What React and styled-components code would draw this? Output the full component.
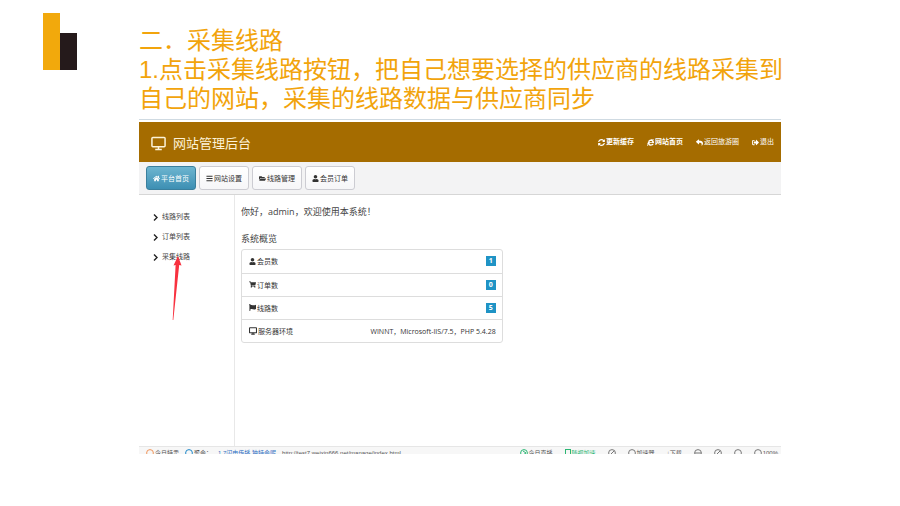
import React from 'react';
import styled, {createGlobalStyle} from "styled-components";
import {
    FaHome, FaBars, FaFolderOpen, FaUser, FaShoppingCart, FaFlag,
    FaSyncAlt, FaInternetExplorer, FaReply, FaSignOutAlt,
} from "react-icons/fa";

const GlobalStyle = createGlobalStyle`
  * {
    box-sizing: border-box;
  }

  body {
    margin: 0;
    background-color: #fff;
    font-family: "Open Sans", "Noto Sans CJK SC", sans-serif;
    color: #444;
  }
`;

const StyledSlide = styled.div`
  display: grid;
  grid-template-columns: 96px 1fr;
  padding: 13px 109px 0 43px;
`;

const Logo = styled.svg`
  display: block;
  width: 34px;
  height: 57px;
`;

const Title = styled.h1`
  margin: 13px 0 6px;
  font-family: "Liberation Sans", "Noto Sans CJK SC", sans-serif;
  font-size: 24px;
  font-weight: 400;
  line-height: 29px;
  color: #f2a40c;
  white-space: nowrap;
`;

const Panel = styled.section`
  margin-right: 10px;
  border-top: 1px solid #cfdae2;
`;

const Header = styled.header`
  display: flex;
  align-items: center;
  justify-content: space-between;
  height: 40px;
  margin-top: 2px;
  padding: 0 7px 0 12px;
  background-color: #a56c00;
  color: #fff;
`;

const Brand = styled.h2`
  display: flex;
  align-items: center;
  gap: 7px;
  margin: 0;
  padding-top: 2px;
  font-size: 13px;
  font-weight: 400;
  line-height: 16px;
  color: #fdf3d8;
`;

const TopNav = styled.nav`
  display: flex;
  gap: 13px;
`;

const TopLink = styled.a`
  display: flex;
  align-items: center;
  gap: 1px;
  font-size: 7px;
  font-weight: ${({$bold}) => $bold ? 700 : 400};
  line-height: 10px;
  color: #fff;
  text-decoration: none;
`;

const Toolbar = styled.nav`
  display: flex;
  gap: 3px;
  padding: 4px 7px;
  background-color: #f3f3f4;
  border-bottom: 1px solid #d6d6d6;
`;

const ToolButton = styled.button`
  display: flex;
  align-items: center;
  justify-content: center;
  gap: 1px;
  width: 50px;
  height: 24px;
  padding: 0;
  border: 1px solid ${({$active}) => $active ? "#3a7f9d" : "#ccccd2"};
  border-radius: 3px;
  background: ${({$active}) => $active ? "linear-gradient(#6db5d0, #3d8fb3)" : "linear-gradient(#fff, #f6f6f8)"};
  font-family: inherit;
  font-size: 7px;
  color: ${({$active}) => $active ? "#fff" : "#333"};
`;

const Body = styled.div`
  display: grid;
  grid-template-columns: 96px 1fr;
  min-height: 251px;
`;

const Sidebar = styled.aside`
  position: relative;
  padding: 12px 0 0 14px;
  border-right: 1px solid #e8e8e8;
`;

const SideLink = styled.a`
  display: flex;
  align-items: center;
  gap: 4px;
  font-size: 7px;
  line-height: 20px;
  color: #444;
  text-decoration: none;
`;

const Pointer = styled.svg`
  position: absolute;
  top: 61px;
  left: 32px;
  width: 12px;
  height: 66px;
`;

const Content = styled.main`
  padding: 9px 6px;
`;

const Greeting = styled.p`
  margin: 0 0 12px;
  font-size: 9px;
  line-height: 15px;
`;

const SectionTitle = styled.h3`
  margin: 0 0 3px;
  font-size: 9px;
  font-weight: 400;
  line-height: 15px;
`;

const StatList = styled.ul`
  width: 49%;
  margin: 0;
  padding: 0;
  list-style: none;
  border: 1px solid #ddd;
  border-radius: 3px;
`;

const StatRow = styled.li`
  display: flex;
  align-items: center;
  justify-content: space-between;
  height: 23px;
  padding: 0 6px 1px 7px;
  font-size: 7px;
  color: #333;

  & + & {
    border-top: 1px solid #ddd;
  }
`;

const StatName = styled.span`
  display: flex;
  align-items: center;
  gap: 1px;
`;

const Badge = styled.span`
  width: 10px;
  background-color: #1f93c5;
  font-size: 7px;
  font-weight: 700;
  line-height: 10px;
  text-align: center;
  color: #fff;
`;

const StatusBar = styled.footer`
  display: flex;
  justify-content: space-between;
  height: 8px;
  padding: 2px 3px 0 7px;
  overflow: hidden;
  border-top: 1px solid #e6e6e6;
  background-color: #f7f7f7;
  font-family: "Liberation Sans", "Noto Sans CJK SC", sans-serif;
  font-size: 6px;
  line-height: 8px;
  white-space: nowrap;
`;

const StatusGroup = styled.div`
  display: flex;
  gap: ${({$gap}) => $gap}px;
`;

const StatusItem = styled.span`
  display: flex;
  gap: 1px;
  color: ${({$color}) => $color || "#555"};
`;

const DesktopIcon = ({size = 8, strokeWidth = 1.6}) => (
    <svg width={size} height={size} viewBox="0 0 16 16" fill="none" stroke="currentColor" strokeWidth={strokeWidth}>
        <rect x="1" y="1.5" width="14" height="10" rx="1"/>
        <path d="M8 11.5V14M4.5 14.3h7"/>
    </svg>
);

const Chevron = () => (
    <svg width={5} height={7} viewBox="0 0 5 7" fill="none" stroke="#222" strokeWidth="1.4">
        <path d="M1 0.6L4 3.5L1 6.4"/>
    </svg>
);

const Ring = ({color, children}) => (
    <svg width={8} height={8} viewBox="0 0 8 8" fill="none" stroke={color}>
        <circle cx="4" cy="4" r="3.4"/>
        {children}
    </svg>
);

const topLinks = [
    {name: "更新缓存", Icon: FaSyncAlt, bold: true},
    {name: "网站首页", Icon: FaInternetExplorer, bold: true},
    {name: "返回旅游圈", Icon: FaReply},
    {name: "退出", Icon: FaSignOutAlt},
];

const tabs = [
    {name: "平台首页", Icon: FaHome, active: true},
    {name: "网站设置", Icon: FaBars},
    {name: "线路管理", Icon: FaFolderOpen},
    {name: "会员订单", Icon: FaUser},
];

const sideLinks = ["线路列表", "订单列表", "采集线路"];

const stats = [
    {name: "会员数", Icon: FaUser, count: 1},
    {name: "订单数", Icon: FaShoppingCart, count: 0},
    {name: "线路数", Icon: FaFlag, count: 5},
];

const App = () => {
    return (
        <>
            <GlobalStyle/>
            <StyledSlide>
                <Logo viewBox="0 0 34 57">
                    <rect width="17" height="57" fill="#f2a90c"/>
                    <rect x="17" y="20" width="17" height="37" fill="#251a1b"/>
                </Logo>
                <div>
                    <Title>
                        二．采集线路<br/>
                        1.点击采集线路按钮，把自己想要选择的供应商的线路采集到<br/>
                        自己的网站，采集的线路数据与供应商同步
                    </Title>
                    <Panel>
                        <Header>
                            <Brand><DesktopIcon size={15}/>网站管理后台</Brand>
                            <TopNav>
                                {topLinks.map(({name, Icon, bold}) => <TopLink key={name} href="#" $bold={bold}>
                                    <Icon size={7}/>{name}
                                </TopLink>)}
                            </TopNav>
                        </Header>
                        <Toolbar>
                            {tabs.map(({name, Icon, active}) => <ToolButton key={name} type="button" $active={active}>
                                <Icon size={7}/>{name}
                            </ToolButton>)}
                        </Toolbar>
                        <Body>
                            <Sidebar>
                                {sideLinks.map(name => <SideLink key={name} href="#"><Chevron/>{name}</SideLink>)}
                                <Pointer viewBox="0 0 12 66">
                                    <path d="M7 0L10.5 9.5L8.2 9L2.3 64L1.7 64L4.6 9L2.5 9.5Z" fill="#f8313f"/>
                                </Pointer>
                            </Sidebar>
                            <Content>
                                <Greeting>你好，admin，欢迎使用本系统！</Greeting>
                                <SectionTitle>系统概览</SectionTitle>
                                <StatList>
                                    {stats.map(({name, Icon, count}) => <StatRow key={name}>
                                        <StatName><Icon size={7}/>{name}</StatName>
                                        <Badge>{count}</Badge>
                                    </StatRow>)}
                                    <StatRow>
                                        <StatName><DesktopIcon strokeWidth={2.2}/>服务器环境</StatName>
                                        <span>WINNT，Microsoft-IIS/7.5，PHP 5.4.28</span>
                                    </StatRow>
                                </StatList>
                            </Content>
                        </Body>
                        <StatusBar>
                            <StatusGroup $gap={6}>
                                <StatusItem><Ring color="#f0955a"/>今日特卖</StatusItem>
                                <StatusItem><Ring color="#1d86c8"/>聚会：</StatusItem>
                                <StatusItem $color="#2f6fc4">1.7闪电传播 独特会呢</StatusItem>
                                <StatusItem>http://test7.weixin666.net/manage/index.html</StatusItem>
                            </StatusGroup>
                            <StatusGroup $gap={12}>
                                <StatusItem><Ring color="#2bb673"><path d="M3 2L6 4L3 6"/></Ring>今日直播</StatusItem>
                                <StatusItem $color="#2bb673">
                                    <svg width={6} height={8} viewBox="0 0 6 8" fill="none" stroke="currentColor">
                                        <rect x="0.5" y="0.5" width="5" height="7"/>
                                    </svg>
                                    随视加速
                                </StatusItem>
                                <StatusItem><Ring color="#777"><path d="M2 6L6 2"/></Ring></StatusItem>
                                <StatusItem><Ring color="#777"/>加速器</StatusItem>
                                <StatusItem>↓下载</StatusItem>
                                <StatusItem><Ring color="#777"><path d="M1 4H7"/></Ring></StatusItem>
                                <StatusItem><Ring color="#777"><path d="M2 6L6 2"/></Ring></StatusItem>
                                <StatusItem><Ring color="#777"/></StatusItem>
                                <StatusItem><Ring color="#777"/>100%</StatusItem>
                            </StatusGroup>
                        </StatusBar>
                    </Panel>
                </div>
            </StyledSlide>
        </>
    );
};

export default App;
